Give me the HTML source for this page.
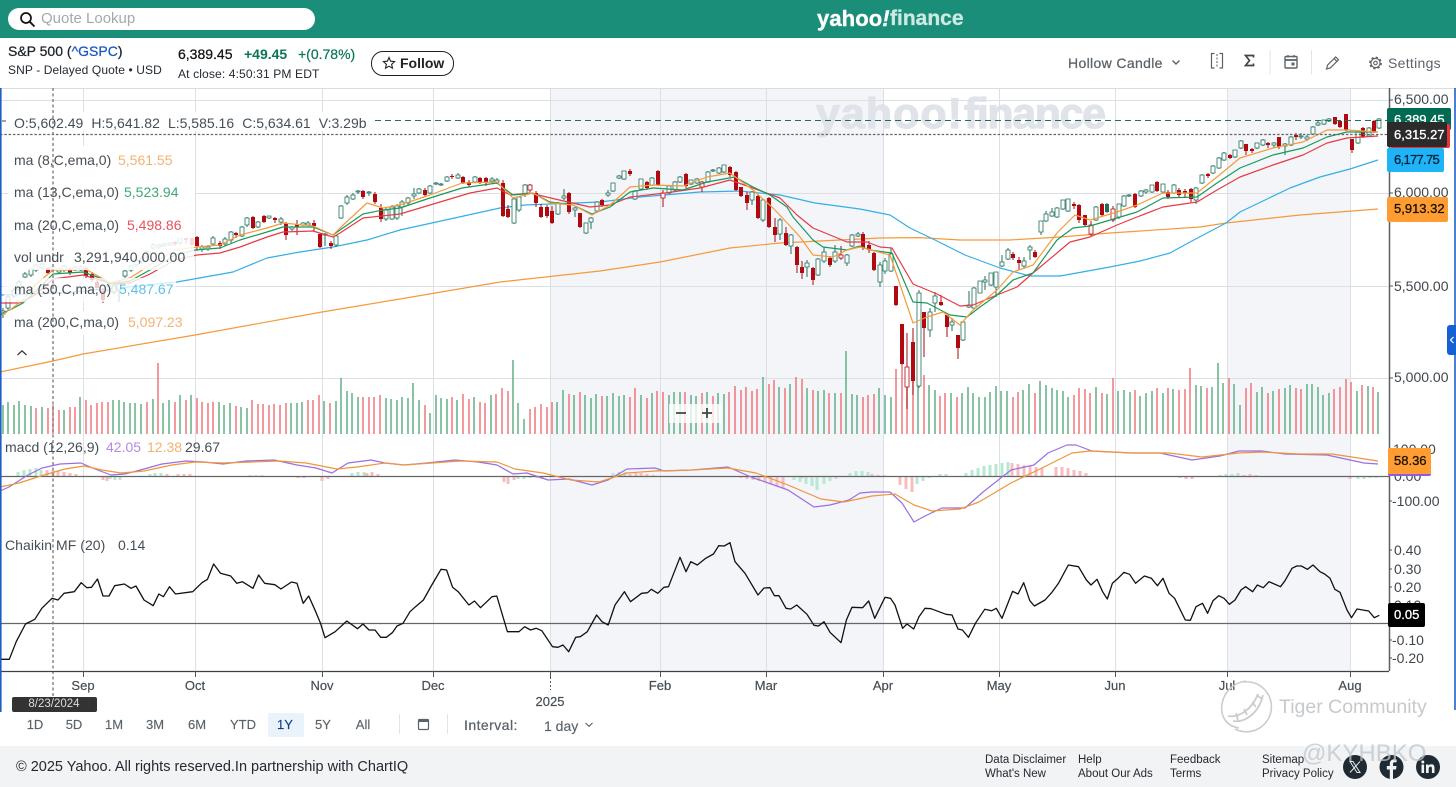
<!DOCTYPE html>
<html lang="en"><head><meta charset="utf-8"><title>S&amp;P 500 Chart</title>
<style>
html,body{margin:0;padding:0;background:#fff}
body{width:1456px;height:787px;overflow:hidden;position:relative;font-family:"Liberation Sans",sans-serif;color:#232a31}
.t{position:absolute;white-space:nowrap;line-height:16px}
.md{-webkit-text-stroke:.25px currentColor}
.c{transform:translateX(-50%)}
.leg{font-size:14px;color:#464e56}
.ax{font-size:14px;color:#3f464c;left:1394px}
.x{font-size:13px;color:#464e56;-webkit-text-stroke:.2px currentColor}
.r{font-size:13px;color:#5b636a;top:717px;-webkit-text-stroke:.15px currentColor}
.f{font-size:11.5px;color:#232a31}
.box{position:absolute;border-radius:2px}
.boxt{position:absolute;font-size:13px;line-height:16px;white-space:nowrap;-webkit-text-stroke:.3px currentColor}
</style></head><body>

<svg width="1456" height="787" viewBox="0 0 1456 787" style="position:absolute;left:0;top:0">
<rect x="550" y="88" width="333" height="583" fill="#f3f5f9"/>
<rect x="1227" y="88" width="123" height="583" fill="#f3f5f9"/>
<g font-family="Liberation Sans" font-weight="700" fill="#e0e3ea" stroke="#e0e3ea" stroke-width="1.2">
<text x="816" y="128" font-size="43" textLength="146">yahoo!</text>
<text x="964" y="128" font-size="43" textLength="142">finance</text>
</g>
<path d="M83.5 88V671M195.5 88V671M322.5 88V671M433.5 88V671M550.5 88V671M660.5 88V671M766.5 88V671M883.5 88V671M999.5 88V671M1115.5 88V671M1227.5 88V671M1350.5 88V671" stroke="#dcdfe4" fill="none"/>
<path d="M0 100.5H1389M0 193.5H1389M0 286.5H1389M0 378.5H1389" stroke="#dcdfe4" fill="none"/>
<path d="M0 88.5H1456" stroke="#dadde0"/>
<!-- volume -->
<path fill="none" stroke="#55aa7c" stroke-width="1.4" d="M3 405V434M8 402V434M14 405V434M19 401V434M25 405V434M31 406V434M42 407V434M64 410V434M80 397V434M113 400V434M119 400V434M124 402V434M130 403V434M135 403V434M141 404V434M153 399V434M163 403V434M169 400V434M180 395V434M191 395V434M219 402V434M224 405V434M230 403V434M241 407V434M247 408V434M291 403V434M297 403V434M302 402V434M324 401V434M336 401V434M341 378V434M347 391V434M352 393V434M358 397V434M386 398V434M391 399V434M397 400V434M402 397V434M408 398V434M413 383V434M419 400V434M430 413V434M436 395V434M441 398V434M447 399V434M457 400V434M474 397V434M491 395V434M513 360V434M518 403V434M524 419V434M557 402V434M563 390V434M574 395V434M585 395V434M591 398V434M596 394V434M607 396V434M613 393V434M619 396V434M624 395V434M641 395V434M652 393V434M669 395V434M674 392V434M680 392V434M691 395V434M696 396V434M707 392V434M718 393V434M724 394V434M763 377V434M779 387V434M790 384V434M807 388V434M818 391V434M824 390V434M835 393V434M846 351V434M852 394V434M857 395V434M879 388V434M885 395V434M891 397V434M918 370V434M929 385V434M935 390V434M951 393V434M962 393V434M968 387V434M973 393V434M979 397V434M985 397V434M990 392V434M996 386V434M1001 391V434M1007 391V434M1023 390V434M1029 384V434M1040 381V434M1046 385V434M1052 388V434M1057 390V434M1063 391V434M1068 397V434M1096 387V434M1107 394V434M1118 391V434M1124 390V434M1130 392V434M1140 396V434M1146 393V434M1152 391V434M1163 393V434M1173 389V434M1196 385V434M1201 386V434M1212 387V434M1218 363V434M1223 383V434M1234 384V434M1240 405V434M1257 392V434M1262 387V434M1273 391V434M1285 388V434M1290 385V434M1307 384V434M1312 384V434M1318 387V434M1323 395V434M1329 393V434M1357 391V434M1368 386V434M1378 392V434"/>
<path fill="none" stroke="#ee6c72" stroke-width="1.4" d="M36 408V434M48 408V434M53 405V434M59 410V434M70 407V434M75 407V434M86 400V434M91 405V434M97 403V434M102 402V434M108 402V434M147 402V434M158 363V434M175 402V434M186 400V434M197 398V434M202 402V434M208 403V434M213 402V434M236 406V434M252 400V434M258 404V434M263 404V434M269 405V434M274 404V434M280 405V434M286 403V434M308 400V434M313 400V434M319 395V434M330 403V434M363 397V434M369 397V434M374 397V434M380 395V434M425 405V434M452 397V434M463 394V434M469 399V434M480 402V434M485 403V434M496 394V434M502 388V434M508 391V434M530 409V434M535 407V434M541 404V434M547 407V434M552 402V434M569 394V434M580 392V434M602 396V434M630 397V434M635 388V434M647 398V434M657 391V434M663 392V434M685 392V434M702 393V434M713 396V434M729 392V434M735 386V434M741 390V434M746 387V434M752 391V434M757 389V434M769 384V434M774 380V434M785 388V434M796 377V434M802 379V434M813 390V434M829 393V434M841 393V434M863 397V434M868 395V434M874 394V434M896 369V434M902 365V434M907 377V434M913 373V434M924 375V434M940 396V434M945 393V434M957 397V434M1013 397V434M1018 392V434M1035 393V434M1074 395V434M1079 388V434M1085 389V434M1090 393V434M1102 393V434M1113 378V434M1135 390V434M1157 388V434M1168 388V434M1179 390V434M1185 389V434M1190 368V434M1207 388V434M1229 378V434M1246 388V434M1251 383V434M1268 393V434M1279 389V434M1296 388V434M1301 389V434M1334 389V434M1340 387V434M1346 379V434M1351 382V434M1362 385V434M1373 387V434"/>
<!-- MA lines -->
<g fill="none" stroke-width="1.2" stroke-linejoin="round">
<polyline stroke="#f59a3c" points="0,372 53,361 83,354 195,335 322,312 400,299 500,282 600,271 660,262 730,248 780,243 840,240 880,238 920,237.6 960,240 1010,240 1060,237 1110,233 1200,227 1226,223 1300,215 1378,209"/>
<polyline stroke="#35aee8" points="0,295 60,293 120,288 177,282 233,272 267,258 300,252 333,247 367,240 400,230 500,208 525,205 600,202 640,197 700,192 740,191 780,195 815,203 860,209 890,215 910,228 935,240 965,255 1000,268 1030,276 1060,276 1110,267 1140,261 1170,253 1190,242 1226,223 1240,212 1290,188 1320,177 1350,169 1378,160"/>
</g>
<!-- candle wicks -->
<path fill="none" stroke="#1f6f5a" stroke-width="1" d="M3 308V318M8 295V310M14 288V298M19 280V291M25 272V278M31 268V277M36 264V272M42 263V270M53 266V271M59 268V273M64 265V272M75 266V271M81 265V271M108 283V292M114 284V294M119 280V302M125 269V278M131 265V272M136 258V268M142 256V264M147 250V258M153 243V250M159 244V249M164 243V247M170 242V246M180 237V245M202 245V252M208 245V251M213 236V246M225 237V246M231 231V243M242 226V237M247 217V227M258 221V228M269 216V219M281 217V225M292 226V231M303 222V226M308 221V226M325 233V246M336 235V247M341 205V219M347 195V205M353 193V200M358 190V194M369 191V196M386 207V221M392 205V220M397 204V220M402 200V216M408 197V205M414 188V199M419 188V194M430 185V194M436 182V185M441 183V186M447 176V182M458 173V179M475 176V183M492 177V183M497 178V184M514 198V224M519 196V212M525 184V197M558 202V215M564 189V200M575 207V217M586 223V234M591 217V229M597 201V212M608 190V197M613 183V192M619 175V179M624 171V180M635 190V200M641 179V190M652 177V186M669 185V194M675 181V191M680 176V183M691 180V185M697 178V184M708 171V183M713 169V172M719 167V174M724 165V173M752 191V205M763 199V222M780 218V240M791 234V254M807 260V277M818 258V276M824 247V263M835 245V263M847 254V266M852 234V247M858 232V237M880 262V287M885 258V274M891 248V272M919 290V388M930 308V337M935 292V312M952 318V331M963 322V341M969 291V308M974 287V309M980 281V293M985 276V290M991 273V286M996 272V297M1002 255V267M1008 248V260M1024 257V269M1030 245V260M1041 221V235M1046 211V222M1052 208V217M1057 207V218M1063 200V210M1068 199V212M1096 206V221M1107 203V213M1119 204V219M1124 195V207M1129 194V197M1141 190V197M1146 189V194M1152 185V193M1163 184V193M1174 184V194M1196 187V204M1202 174V184M1213 165V174M1219 157V169M1224 152V161M1235 150V158M1241 140V149M1257 143V149M1263 139V146M1274 142V148M1285 143V155M1291 136V146M1301 133V139M1307 135V141M1313 126V135M1318 121V126M1324 120V125M1329 118V122M1358 131V144M1369 127V137M1379 118V129"/>
<path fill="none" stroke="#a80a10" stroke-width="1" d="M48 267V274M70 268V275M86 266V278M92 272V282M97 280V290M103 288V303M175 241V246M186 236V244M192 234V249M197 236V251M220 241V249M236 232V238M253 216V229M264 215V223M275 217V223M286 222V240M297 220V235M314 220V231M320 233V248M331 241V249M363 190V199M375 192V204M381 204V222M425 188V197M452 174V179M463 176V184M469 180V187M480 177V184M486 177V186M503 180V217M508 205V218M530 184V192M536 191V207M541 204V218M547 205V218M552 206V224M569 192V214M580 213V228M602 199V207M630 169V176M647 181V190M658 170V186M663 190V207M686 173V188M702 181V192M730 166V177M736 171V191M741 187V197M747 192V210M758 195V219M769 197V228M775 218V242M786 227V246M797 246V273M802 261V279M813 267V285M830 256V267M841 246V260M863 232V250M869 241V253M874 252V271M896 286V306M902 324V365M907 333V409M913 328V395M924 312V357M941 295V306M947 315V337M958 335V359M1013 252V260M1019 257V270M1035 250V258M1074 202V209M1079 204V223M1085 215V227M1091 221V237M1102 203V216M1113 206V222M1135 193V208M1157 181V192M1168 190V199M1179 188V197M1185 189V197M1191 188V202M1208 173V178M1230 154V159M1246 144V155M1252 148V153M1268 142V148M1279 137V149M1296 133V140M1335 117V125M1340 120V128M1346 114V131M1352 139V153M1363 127V138M1374 120V133"/>
<!-- candle bodies green hollow -->
<path fill="#fff" stroke="#1f6f5a" stroke-width=".8" d="M1 311h4v3h-4zM6 297h4v11h-4zM12 290h4v6h-4zM17 282h4v7h-4zM23 274h4v3h-4zM29 269h4v6h-4zM34 265h4v5h-4zM40 264h4v4h-4zM51 267h4v3h-4zM57 269h4v3h-4zM62 266h4v4h-4zM73 267h4v3h-4zM79 267h4v3h-4zM106 286h4v4h-4zM112 286h4v6h-4zM117 284h4v6h-4zM123 271h4v5h-4zM129 266h4v4h-4zM134 260h4v5h-4zM140 258h4v4h-4zM145 252h4v4h-4zM151 245h4v3h-4zM157 245h4v2h-4zM162 244h4v2h-4zM168 243h4v2h-4zM178 238h4v5h-4zM200 247h4v2h-4zM206 247h4v2h-4zM211 238h4v6h-4zM223 239h4v5h-4zM229 232h4v8h-4zM240 227h4v9h-4zM245 218h4v7h-4zM256 222h4v5h-4zM267 216h4v2h-4zM279 219h4v3h-4zM290 227h4v2h-4zM301 223h4v2h-4zM306 223h4v2h-4zM323 234h4v1h-4zM334 236h4v9h-4zM339 206h4v12h-4zM345 197h4v6h-4zM351 195h4v4h-4zM356 191h4v1h-4zM367 192h4v1h-4zM384 210h4v9h-4zM390 207h4v12h-4zM395 206h4v12h-4zM400 202h4v5h-4zM406 198h4v5h-4zM412 194h4v2h-4zM417 189h4v4h-4zM428 186h4v7h-4zM434 183h4v1h-4zM439 184h4v1h-4zM445 177h4v4h-4zM456 175h4v3h-4zM473 177h4v5h-4zM490 179h4v2h-4zM495 180h4v2h-4zM512 199h4v24h-4zM517 197h4v13h-4zM523 185h4v9h-4zM556 203h4v11h-4zM562 196h4v2h-4zM573 208h4v2h-4zM584 223h4v10h-4zM589 218h4v4h-4zM595 202h4v9h-4zM606 193h4v2h-4zM611 183h4v8h-4zM617 176h4v2h-4zM622 171h4v8h-4zM633 191h4v8h-4zM639 179h4v10h-4zM650 178h4v7h-4zM667 186h4v7h-4zM673 182h4v8h-4zM678 177h4v5h-4zM689 180h4v4h-4zM695 179h4v4h-4zM706 172h4v10h-4zM711 170h4v1h-4zM717 168h4v5h-4zM722 165h4v7h-4zM750 192h4v8h-4zM761 200h4v20h-4zM778 220h4v14h-4zM789 235h4v11h-4zM805 263h4v4h-4zM816 259h4v16h-4zM822 252h4v9h-4zM833 252h4v9h-4zM845 255h4v8h-4zM850 235h4v11h-4zM856 234h4v2h-4zM878 265h4v17h-4zM883 261h4v10h-4zM889 254h4v17h-4zM917 293h4v93h-4zM928 312h4v18h-4zM933 296h4v7h-4zM950 322h4v3h-4zM961 322h4v18h-4zM967 305h4v2h-4zM972 288h4v20h-4zM978 281h4v12h-4zM983 280h4v2h-4zM989 273h4v12h-4zM994 272h4v15h-4zM1000 262h4v4h-4zM1006 250h4v9h-4zM1022 261h4v5h-4zM1028 247h4v3h-4zM1039 221h4v11h-4zM1044 214h4v7h-4zM1050 212h4v4h-4zM1055 208h4v9h-4zM1061 200h4v9h-4zM1066 199h4v12h-4zM1094 207h4v13h-4zM1117 204h4v13h-4zM1122 196h4v10h-4zM1127 195h4v1h-4zM1139 191h4v5h-4zM1144 190h4v2h-4zM1150 185h4v7h-4zM1161 184h4v8h-4zM1172 185h4v8h-4zM1194 188h4v12h-4zM1200 175h4v8h-4zM1211 166h4v7h-4zM1217 158h4v10h-4zM1222 153h4v7h-4zM1233 150h4v7h-4zM1239 141h4v7h-4zM1255 143h4v5h-4zM1261 140h4v5h-4zM1272 143h4v2h-4zM1283 144h4v2h-4zM1289 137h4v8h-4zM1299 136h4v1h-4zM1305 137h4v2h-4zM1311 127h4v7h-4zM1316 123h4v2h-4zM1322 120h4v4h-4zM1327 119h4v2h-4zM1356 132h4v11h-4zM1367 128h4v8h-4zM1377 119h4v9h-4z"/>
<path fill="#1f6f5a" d="M1105 204h4v8h-4z"/>
<!-- candle bodies red -->
<path fill="#b00a10" d="M46 268h4v5h-4zM68 270h4v3h-4zM84 268h4v8h-4zM90 274h4v6h-4zM95 282h4v6h-4zM101 291h4v9h-4zM173 242h4v2h-4zM184 237h4v3h-4zM190 235h4v10h-4zM195 237h4v9h-4zM218 243h4v3h-4zM234 233h4v2h-4zM251 217h4v11h-4zM262 216h4v6h-4zM273 218h4v2h-4zM284 223h4v12h-4zM295 224h4v3h-4zM312 223h4v3h-4zM318 234h4v13h-4zM329 243h4v3h-4zM361 191h4v6h-4zM373 194h4v8h-4zM379 208h4v11h-4zM423 190h4v5h-4zM450 176h4v1h-4zM461 177h4v6h-4zM467 182h4v3h-4zM478 178h4v4h-4zM484 178h4v5h-4zM501 183h4v33h-4zM506 209h4v8h-4zM534 193h4v10h-4zM539 207h4v10h-4zM545 207h4v9h-4zM550 211h4v12h-4zM567 193h4v19h-4zM578 213h4v14h-4zM600 200h4v5h-4zM628 171h4v3h-4zM645 182h4v6h-4zM656 171h4v14h-4zM684 174h4v12h-4zM728 167h4v8h-4zM734 172h4v18h-4zM739 187h4v9h-4zM745 195h4v8h-4zM756 196h4v22h-4zM767 198h4v29h-4zM773 227h4v8h-4zM784 233h4v12h-4zM795 247h4v18h-4zM800 267h4v6h-4zM811 268h4v12h-4zM828 258h4v7h-4zM861 234h4v14h-4zM867 245h4v5h-4zM872 253h4v17h-4zM894 286h4v19h-4zM900 324h4v40h-4zM911 342h4v39h-4zM922 312h4v16h-4zM939 302h4v3h-4zM945 315h4v12h-4zM956 335h4v13h-4zM1011 254h4v4h-4zM1017 260h4v3h-4zM1033 252h4v5h-4zM1072 204h4v2h-4zM1077 205h4v15h-4zM1083 215h4v10h-4zM1100 204h4v11h-4zM1133 194h4v13h-4zM1155 182h4v9h-4zM1166 192h4v5h-4zM1177 190h4v5h-4zM1183 191h4v2h-4zM1189 189h4v10h-4zM1206 174h4v2h-4zM1228 155h4v3h-4zM1244 144h4v7h-4zM1250 149h4v2h-4zM1266 143h4v2h-4zM1277 137h4v10h-4zM1294 135h4v2h-4zM1333 117h4v7h-4zM1338 121h4v6h-4zM1344 114h4v16h-4zM1350 139h4v11h-4zM1361 128h4v9h-4zM1372 121h4v11h-4z"/>
<path fill="#fff" stroke="#b00a10" stroke-width=".8" d="M528 185h4v5h-4zM661 193h4v5h-4zM700 182h4v5h-4zM839 255h4v3h-4zM905 367h4v20h-4zM1089 225h4v9h-4zM1111 209h4v11h-4z"/>
<g fill="none" stroke-width="1.2" stroke-linejoin="round">
<polyline stroke="#e83a45" points="0,303 20,303 35,295 53,279 83,275 100,280 115,284 130,283 150,274 175,260 197,255 220,253 240,247 267,237 283,232 313,231 333,237 340,233 363,218 400,214 430,205 470,193 497,188 510,195 530,193 555,199 590,207 610,205 630,197 665,193 700,188 730,180 750,187 780,198 797,215 813,228 830,235 847,242 867,242 880,247 892,248 913,284 937,294 960,306 973,305 997,295 1017,287 1033,273 1057,253 1070,242 1090,237 1117,225 1137,217 1163,207 1197,202 1217,190 1240,177 1273,165 1303,155 1327,143 1347,138 1378,136"/>
<polyline stroke="#1a9a5c" points="0,314 10,310 23,303 35,292 53,274 83,272 100,278 110,284 130,281 150,270 175,255 195,250 220,248 240,240 267,232 283,227 313,227 333,235 340,230 363,214 383,210 400,208 430,198 462,188 497,183 513,195 533,193 550,202 573,205 592,214 610,207 630,192 653,188 683,190 707,182 735,177 753,187 770,195 787,207 793,217 813,240 823,247 847,250 860,246 870,250 892,253 913,302 927,303 950,315 967,317 980,307 997,295 1013,280 1033,273 1057,240 1073,228 1090,226 1117,218 1137,212 1163,198 1197,197 1217,183 1240,168 1273,155 1303,148 1327,137 1347,132 1378,132"/>
<polyline stroke="#f59a3c" points="0,316 10,310 23,300 35,285 53,270 70,270 85,269 100,277 110,283 130,278 150,265 175,250 197,247 220,245 240,235 267,228 283,223 313,226 333,235 340,228 367,203 383,208 400,205 430,195 462,183 497,182 513,198 533,193 550,203 573,205 592,215 610,205 630,187 653,185 683,186 707,177 730,173 753,190 773,208 790,226 800,237 813,255 833,257 847,250 860,247 890,255 913,323 927,317 943,312 960,325 973,310 997,290 1013,272 1033,265 1057,233 1075,215 1090,220 1117,212 1137,205 1163,193 1197,193 1217,177 1240,158 1273,148 1303,142 1327,130 1347,130 1378,132"/>
</g>
<!-- MACD histogram -->
<path fill="none" stroke="#b6e8d2" stroke-width="3" d="M18 476V472M24 476V470M30 476V469M36 476V468M41 476V470M110 476V479M115 476V480M120 476V480M150 476V474M155 476V473M161 476V473M167 476V474M250 476V475M256 476V475M262 476V475M352 476V473M358 476V472M364 476V472M518 476V479M524 476V479M530 476V478M613 476V473M619 476V472M625 476V472M794 476V480M800 476V482M806 476V484M812 476V486M817 476V490M824 476V484M830 476V481M836 476V479M850 476V473M856 476V471M862 476V471M868 476V472M940 476V474M946 476V474M917 476V484M923 476V481M929 476V478M966 476V473M972 476V470M978 476V468M984 476V466M990 476V465M996 476V464M1002 476V463M1008 476V462M1220 476V475M1226 476V474M1232 476V474M1238 476V473M1358 476V479M1364 476V479M1370 476V478M1376 476V478M1382 476V477"/>
<path fill="none" stroke="#f8bcbf" stroke-width="3" d="M47 476V470M53 476V470M58 476V471M64 476V472M70 476V473M76 476V474M103 476V480M107 476V481M167 476V474M178 476V474M184 476V474M190 476V474M298 476V478M304 476V478M322 476V480M328 476V479M322 476V481M372 476V472M367 476V473M378 476V474M504 476V482M508 476V484M514 476V480M537 476V478M542 476V479M630 476V474M636 476V473M641 476V473M647 476V474M653 476V475M741 476V478M747 476V479M753 476V480M759 476V481M765 476V482M771 476V484M777 476V486M783 476V488M802 476V478M872 476V474M878 476V475M884 476V475M900 476V485M906 476V489M912 476V492M1012 476V463M1018 476V464M1024 476V465M1030 476V466M1036 476V467M1042 476V468M1056 476V467M1062 476V467M1068 476V468M1074 476V470M1080 476V471M1086 476V473M1180 476V478M1186 476V479M1192 476V479M1244 476V475M1250 476V474M1256 476V475M1350 476V479"/>
<path d="M0 476.5H1389M0 623.5H1389" stroke="#666" stroke-width="1.2"/>
<g fill="none" stroke-width="1.2" stroke-linejoin="round">
<polyline stroke="#9a6fe2" points="0,491 9,487 28,475 42,468 60,464 81,463 95,469 111,475 125,474 144,469 162,464 186,461 204,462 223,464 246,461 274,460 297,465 316,468 332,473 348,463 371,460 385,463 404,465 427,463 455,460 478,462 497,465 513,474 527,473 548,480 569,479 592,485 608,480 627,469 655,468 664,471 692,470 728,467 751,477 774,485 788,490 814,507 830,505 849,500 860,493 872,492 890,492 902,503 914,522 925,516 942,508 955,508 965,508 983,492 1011,470 1034,465 1048,453 1067,445 1076,445 1092,451 1132,453 1160,453 1192,460 1220,456 1239,451 1262,451 1285,454 1327,455 1350,460 1364,463 1378,464"/>
<polyline stroke="#f0953b" points="0,487 19,483 44,475 65,469 84,466 102,470 121,473 144,471 172,465 195,462 223,463 251,462 279,461 306,463 337,469 357,467 385,463 404,465 432,463 460,461 497,462 515,469 543,473 571,480 599,482 627,473 655,471 692,470 728,468 756,473 788,485 821,499 844,502 872,496 895,494 914,505 932,511 960,509 979,502 1011,483 1044,467 1072,453 1090,451 1132,453 1169,453 1202,457 1239,453 1262,452 1299,454 1332,454 1378,461"/>
<polyline stroke="#111" stroke-width="1.3" points="0,659.3 9.3,659.3 16.2,641.7 25.5,624 34.8,619.3 41.8,608.3 52,598.3 58,600 64,593.3 74.3,591.7 81.2,582.7 86.8,587.7 91.5,587.3 97.5,579 103,596 109,596 114.7,585.7 124.4,584 131,588.3 136,586 144,600 153.2,605.7 158.8,594 163.4,596.7 169.5,586.7 175.5,594 192.7,591.7 202,582.7 207.5,579.3 213.6,564 220.5,573.3 230.7,576 236.8,583.3 242.3,581.7 253,588.3 258.6,575 264.6,583.3 274.8,584.7 280.9,589 291.5,582 297,583.3 303.2,603.3 308.7,596 315.7,611.7 320.3,622.7 325,637.7 335.2,631.7 346.8,621 357.5,628.7 363,624 369,630 375,630 380.7,637.3 386.3,637.3 392.3,632.7 397,626 403,623.3 410,611.7 415.5,606.7 423.4,600 431.8,585 441,569.3 446.6,570 452.6,587.3 458.2,591.7 468.9,605 474.5,601 480.5,607.7 492,596.7 496.8,596 507.4,631.7 519,631.7 524.6,626.7 530.6,630 536.2,628.3 541.8,630.7 552.5,646.7 558,647.3 563,645 568.7,651.7 575.7,637.3 580.3,636.7 587.3,631.7 596.6,615 602,621.7 608.2,625 615,605 624.4,591.7 630.5,601.7 641.6,593.3 647.6,592.7 651.3,589.3 657.8,593.3 663.9,587.3 668.5,586.7 680,557.3 686,571.7 690.8,561.7 697.3,565 705.7,558.3 713.5,554 718.7,545.7 724.2,546 730,542.7 735,561.7 745,573.3 758,595 764,588 770,587.7 774.4,595.7 779,595.7 786,608.3 790.7,609 796.7,605 807,614.3 814,625.3 818.5,626 824,621.7 830,632.3 841,642.7 846.4,620 852,607.3 862.6,607.7 868.7,601 874.7,618.3 885,597.3 890.5,598.3 895,605 902.6,628.3 907,624 913.7,629 919,616.7 925,608.3 931,608.7 946,614.3 952,615 958,629 962.4,630 968.5,637.3 975.4,623.3 984.7,609.3 991.7,610.7 996.3,608.3 1002,618.3 1012.6,591.3 1018,594 1023.7,582.7 1029.8,600.7 1034.4,606 1045,600 1051.6,592.7 1058.5,583.3 1068.3,565 1078.5,566.7 1086.4,580 1091,585 1097,579.3 1102.6,591.7 1107.3,599 1112.4,583.3 1117,579.3 1124,572.3 1129.6,574.3 1135.6,583.3 1144.4,576 1151.4,578.3 1157.4,585.7 1163,578.3 1169,593.3 1174.6,598.3 1185.3,620 1190.4,620.3 1196,606.7 1202.5,603.3 1207.6,613.3 1213,600.7 1218.7,595.7 1224,598.3 1229.4,604.3 1235,600 1241,590 1245.6,586.7 1252.6,591.7 1257.3,585 1263.3,587.7 1269,581.7 1280.5,586.7 1285,580.7 1292,568.3 1296.7,566 1301.3,566 1307.4,569.3 1313,565 1320,571.7 1324.6,574 1330,578.3 1334.8,589.3 1340,592.3 1347,610 1351.5,617.7 1357,609 1368.7,611 1374.3,617.7 1379.3,615.3"/>
</g>
<!-- label backgrounds -->
<rect x="8" y="112" width="360" height="19" fill="#fff"/>
<rect x="8" y="146" width="187" height="92" fill="#fff"/>
<rect x="4" y="238" width="190" height="32" fill="#fff" fill-opacity=".85"/>
<rect x="4" y="278" width="172" height="24" fill="#fff" fill-opacity=".78"/>
<rect x="8" y="311" width="178" height="24" fill="#fff"/>
<!-- price lines -->
<path d="M375 120.5H1389" stroke="#1f6f5a" stroke-dasharray="6 4" fill="none"/>
<path d="M2 121H6" stroke="#444"/>
<path d="M0 134.5H1389" stroke="#666" stroke-width="1.3" stroke-dasharray="2.5 1.8" fill="none"/>
<path d="M53 88V697" stroke="#777" stroke-width="1.3" stroke-dasharray="3 2.5" fill="none"/>
<!-- axes -->
<path d="M1389.5 88V671" stroke="#5c6064" stroke-width="1.5"/>
<path d="M0 671.5H1389" stroke="#3c4146" stroke-width="1.3"/>
<path d="M83.5 671V677M195.5 671V677M322.5 671V677M433.5 671V677M550.5 671V677M660.5 671V677M766.5 671V677M883.5 671V677M999.5 671V677M1115.5 671V677M1227.5 671V677M1350.5 671V677" stroke="#555"/>
<path d="M1389 100H1393M1389 193H1393M1389 286H1393M1389 378H1393M1389 501H1392M1389 550H1392M1389 569H1392M1389 587H1392M1389 640H1392M1389 658H1392" stroke="#555"/>
<path d="M550.5 677V690" stroke="#555" stroke-dasharray="2 2"/>
<path d="M0.8 88V712" stroke="#1f5fc4" stroke-width="1.6"/>
<path d="M1455 88V710" stroke="#1f5fc4" stroke-width="1.6"/>
<!-- zoom controls -->
<rect x="669" y="404" width="52" height="19" fill="#fff" fill-opacity=".78"/>
<path d="M676 413H686M702 413H712M707 408V418" stroke="#444" stroke-width="1.8"/>
</svg>

<!-- header -->
<div style="position:absolute;left:0;top:0;width:1456px;height:38px;background:#1b8e79"></div>
<div style="position:absolute;left:8px;top:8px;width:307px;height:22px;background:#fff;border-radius:11px"></div>
<svg width="18" height="18" style="position:absolute;left:19px;top:11px" viewBox="0 0 18 18"><circle cx="7" cy="7" r="5" fill="none" stroke="#111" stroke-width="1.7"/><path d="M10.8 10.8L15.5 15.5" stroke="#111" stroke-width="1.9"/></svg>
<div class="t" style="left:41px;top:11px;font-size:15px;color:#a4a8ad">Quote Lookup</div>
<div class="t" style="left:817px;top:7px;font-size:22px;line-height:24px;font-weight:700;color:#fff;letter-spacing:.1px;-webkit-text-stroke:.4px #fff">yahoo<i>!</i></div>
<div class="t" style="left:890px;top:7px;font-size:21px;line-height:24px;font-weight:700;color:#cde9e3;-webkit-text-stroke:.3px #cde9e3">finance</div>

<!-- title row -->
<div class="t md" style="left:8px;top:43px;font-size:14px;color:#1d2329">S&amp;P 500 (<span style="color:#1a56c4">^GSPC</span>)</div>
<div class="t" style="left:8px;top:62px;font-size:12px;color:#232a31;letter-spacing:.1px">SNP - Delayed Quote • USD</div>
<div class="t md" style="left:178px;top:46px;font-size:14px;color:#111">6,389.45</div>
<div class="t" style="left:244px;top:46px;font-size:14px;font-weight:700;color:#0a7558">+49.45</div>
<div class="t" style="left:298px;top:46px;font-size:14px;color:#0a7558;-webkit-text-stroke:.2px #0a7558">+(0.78%)</div>
<div class="t" style="left:178px;top:66px;font-size:12.1px;color:#232a31;letter-spacing:.1px">At close: 4:50:31 PM EDT</div>
<div style="position:absolute;left:371px;top:51px;width:81px;height:23px;border:1.2px solid #222;border-radius:12px"></div>
<svg width="14" height="14" viewBox="0 0 14 14" style="position:absolute;left:382px;top:56px"><path d="M7 1.5L8.6 5.2 12.6 5.6 9.6 8.3 10.5 12.2 7 10.2 3.5 12.2 4.4 8.3 1.4 5.6 5.4 5.2Z" fill="none" stroke="#222" stroke-width="1.1"/></svg>
<div class="t" style="left:400px;top:55px;font-size:14px;font-weight:700;color:#222">Follow</div>

<!-- toolbar -->
<div class="t" style="left:1068px;top:55px;font-size:14px;color:#5b636a;-webkit-text-stroke:.25px #5b636a;letter-spacing:.35px">Hollow Candle</div>
<svg width="1456" height="88" viewBox="0 0 1456 88" style="position:absolute;left:0;top:0" fill="none" stroke="#5b636a">
<path d="M1172.5 60.5l3.5 3.500 3.500-3.500" stroke-width="1.400"/>
<path d="M1214.500 53.500h-3v14.500h3M1219.500 53.500h3v14.500h-3" stroke-width="1.200"/><path d="M1217 54v14" stroke-dasharray="2 1.500"/>
<path d="M1253.500 57.500v-2h-8l4 5-4 5h8v-2" stroke="#444" stroke-width="1.700"/>
<path d="M1270 50v24M1311.500 50v24" stroke="#e2e4e6"/>
<rect x="1285" y="56.500" width="12" height="11.500" rx="1" stroke-width="1.400"/><path d="M1285 60h12" stroke-width="1.800"/><path d="M1288 55v2.500M1294 55v2.500" stroke-width="1.300"/><rect x="1291.500" y="62.500" width="3" height="3" fill="#5b636a" stroke="none"/>
<path d="M1326.500 69l1.200-4 8-8 2.800 2.800-8 8zM1334 58.500l2.800 2.800" stroke-width="1.200"/>
<circle cx="1375.500" cy="63" r="4.600" stroke-width="1.200"/><circle cx="1375.500" cy="63" r="1.800" stroke-width="1.100"/><circle cx="1375.500" cy="63" r="5.600" stroke-width="1.600" stroke-dasharray="2.200 2.200"/>
</svg>
<div class="t" style="left:1388px;top:55px;font-size:14px;color:#5b636a;letter-spacing:.3px">Settings</div>

<!-- legend -->
<div class="t leg" style="left:14px;top:115px;word-spacing:4.200px">O:5,602.49 H:5,641.82 L:5,585.16 C:5,634.61 V:3.29b</div>
<div class="t leg" style="left:14px;top:152px">ma (8,C,ema,0)</div><div class="t leg" style="left:118px;top:152px;color:#f3b273">5,561.55</div>
<div class="t leg" style="left:14px;top:184px">ma (13,C,ema,0)</div><div class="t leg" style="left:124px;top:184px;color:#3fa878">5,523.94</div>
<div class="t leg" style="left:14px;top:217px">ma (20,C,ema,0)</div><div class="t leg" style="left:127px;top:217px;color:#e8525c">5,498.86</div>
<div class="t leg" style="left:14px;top:249px">vol undr</div><div class="t leg" style="left:74px;top:249px;letter-spacing:.15px">3,291,940,000.00</div>
<div class="t leg" style="left:14px;top:281px">ma (50,C,ma,0)</div><div class="t leg" style="left:119px;top:281px;color:#5cc0ec">5,487.67</div>
<div class="t leg" style="left:14px;top:314px">ma (200,C,ma,0)</div><div class="t leg" style="left:128px;top:314px;color:#f3b273">5,097.23</div>
<svg width="12" height="8" style="position:absolute;left:16px;top:349px" viewBox="0 0 12 8"><path d="M1.500 6L6 1.800 10.500 6" fill="none" stroke="#333" stroke-width="1.200"/></svg>
<div class="t leg" style="left:5px;top:439px">macd (12,26,9)</div>
<div class="t leg" style="left:106px;top:439px;color:#b48ae8">42.05</div>
<div class="t leg" style="left:147px;top:439px;color:#f3b273">12.38</div>
<div class="t leg" style="left:185px;top:439px">29.67</div>
<div class="t leg" style="left:5px;top:537px;letter-spacing:.05px">Chaikin MF (20)</div>
<div class="t leg" style="left:118px;top:537px">0.14</div>

<!-- right axis -->
<div class="t ax" style="top:91px">6,500.00</div>
<div class="t ax" style="top:184px">6,000.00</div>
<div class="t ax" style="top:278px">5,500.00</div>
<div class="t ax" style="top:369px">5,000.00</div>
<div class="t ax" style="top:441px;left:1393px">100.00</div>
<div class="t ax" style="top:468px">0.00</div>
<div class="t ax" style="top:493px;left:1392px">-100.00</div>
<div class="t ax" style="top:542px">0.40</div>
<div class="t ax" style="top:561px">0.30</div>
<div class="t ax" style="top:579px">0.20</div>
<div class="t ax" style="top:597px">0.10</div>
<div class="t ax" style="top:632px;left:1392px">-0.10</div>
<div class="t ax" style="top:650px;left:1392px">-0.20</div>

<div class="box" style="left:1387px;top:108px;width:64px;height:22px;background:#006b52"></div>
<div class="boxt" style="left:1394px;top:112px;color:#fff">6,389.45</div>
<div class="box" style="left:1390px;top:124px;width:60px;height:24px;background:#e8353c"></div>
<div class="box" style="left:1387px;top:122px;width:60px;height:25px;background:#2b2b2b"></div>
<div class="boxt" style="left:1394px;top:127px;color:#fff">6,315.27</div>
<div class="box" style="left:1387px;top:148px;width:57px;height:24px;background:#1fb3f7"></div>
<div class="boxt" style="left:1394px;top:152px;color:#06223a;letter-spacing:-.7px">6,177.75</div>
<div class="box" style="left:1387px;top:197px;width:61px;height:25px;background:#ff9d33"></div>
<div class="boxt" style="left:1394px;top:201px;color:#1a1205">5,913.32</div>
<div class="box" style="left:1388px;top:448px;width:43px;height:28px;background:#ff9d33;border-bottom:2px solid #8e5ce0;box-sizing:border-box"></div>
<div class="boxt" style="left:1394px;top:453px;color:#1a1205">58.36</div>
<div class="box" style="left:1388px;top:603px;width:37px;height:24px;background:#000"></div>
<div class="boxt" style="left:1394px;top:607px;color:#fff">0.05</div>
<div style="position:absolute;left:1447px;top:325px;width:9px;height:30px;background:#1560d4;border-radius:3px 0 0 3px"></div>
<svg width="6" height="8" viewBox="0 0 6 8" style="position:absolute;left:1449px;top:336px"><path d="M4.500 1L1.500 4l3 3" fill="none" stroke="#fff" stroke-width="1.200"/></svg>

<!-- x axis -->
<div class="t x c" style="left:83px;top:678px">Sep</div>
<div class="t x c" style="left:195px;top:678px">Oct</div>
<div class="t x c" style="left:322px;top:678px">Nov</div>
<div class="t x c" style="left:433px;top:678px">Dec</div>
<div class="t x c" style="left:550px;top:694px">2025</div>
<div class="t x c" style="left:660px;top:678px">Feb</div>
<div class="t x c" style="left:766px;top:678px">Mar</div>
<div class="t x c" style="left:883px;top:678px">Apr</div>
<div class="t x c" style="left:999px;top:678px">May</div>
<div class="t x c" style="left:1115px;top:678px">Jun</div>
<div class="t x c" style="left:1227px;top:678px">Jul</div>
<div class="t x c" style="left:1350px;top:678px">Aug</div>
<div style="position:absolute;left:12px;top:697px;width:85px;height:15px;background:#333;border-radius:2px"></div>
<div class="t c" style="left:54px;top:697px;font-size:11.5px;line-height:15px;color:#ddd">8/23/2024</div>

<!-- range row -->
<div style="position:absolute;left:268px;top:713px;width:36px;height:24px;background:#eaf3fb;border-radius:2px"></div>
<div class="t r c" style="left:35px">1D</div>
<div class="t r c" style="left:74px">5D</div>
<div class="t r c" style="left:114px">1M</div>
<div class="t r c" style="left:155px">3M</div>
<div class="t r c" style="left:197px">6M</div>
<div class="t r c" style="left:243px">YTD</div>
<div class="t r c" style="left:285px;color:#0f3d8c">1Y</div>
<div class="t r c" style="left:323px">5Y</div>
<div class="t r c" style="left:363px">All</div>
<svg width="60" height="28" viewBox="0 0 60 28" style="position:absolute;left:395px;top:711px" fill="none"><path d="M4.500 3v20M52.500 3v20" stroke="#e2e4e6"/><rect x="23.500" y="8.500" width="10" height="10" rx="1" stroke="#5b636a" stroke-width="1.200"/><path d="M23.500 10h10" stroke="#5b636a" stroke-width="2"/></svg>
<div class="t" style="left:464px;top:717px;font-size:14px;color:#5b636a;-webkit-text-stroke:.25px #5b636a;letter-spacing:.45px">Interval:</div>
<div class="t" style="left:544px;top:718px;font-size:14px;color:#5b636a;-webkit-text-stroke:.15px #5b636a">1 day</div>
<svg width="10" height="6" viewBox="0 0 10 6" style="position:absolute;left:584px;top:722px"><path d="M1.500 1L5 4.300 8.500 1" fill="none" stroke="#5b636a" stroke-width="1.200"/></svg>

<!-- footer -->
<div style="position:absolute;left:0;top:746px;width:1456px;height:41px;background:#f1f3f5"></div>
<div class="t" style="left:16px;top:759px;font-size:14.5px;color:#232a31">© 2025 Yahoo. All rights reserved.In partnership with ChartIQ</div>
<div class="t f" style="left:985px;top:752px">Data Disclaimer</div><div class="t f" style="left:985px;top:766px">What's New</div>
<div class="t f" style="left:1078px;top:752px">Help</div><div class="t f" style="left:1078px;top:766px">About Our Ads</div>
<div class="t f" style="left:1170px;top:752px">Feedback</div><div class="t f" style="left:1170px;top:766px">Terms</div>
<div class="t f" style="left:1262px;top:752px">Sitemap</div><div class="t f" style="left:1262px;top:766px">Privacy Policy</div>
<svg width="110" height="30" viewBox="0 0 110 30" style="position:absolute;left:1342px;top:752px">
<circle cx="13" cy="15" r="12" fill="#1f2a33"/><circle cx="49.500" cy="15" r="12" fill="#1f2a33"/><circle cx="86" cy="15" r="12" fill="#1f2a33"/>
<path d="M8 9.500h3l7 11h-3zM18 9.500l-10 11" fill="none" stroke="#e6e8ea" stroke-width="1"/>
<path d="M51 27v-9.500h3l.5-3.500H51v-2c0-1 .5-1.700 1.800-1.700h1.800V7.600c-.6-.1-1.400-.2-2.400-.2-2.700 0-4.400 1.600-4.400 4.300V14h-3v3.500h3V27z" fill="#f1f3f5"/>
<path d="M79.500 12.500h2.600v8.500h-2.600zM80.800 8.500a1.500 1.500 0 1 1 0 3 1.500 1.500 0 0 1 0-3zM84 12.500h2.500v1.200c.5-.8 1.500-1.400 2.800-1.400 2.600 0 3.200 1.700 3.200 4V21h-2.600v-4.100c0-1.100-.1-2.300-1.400-2.300s-1.800 1.100-1.800 2.300V21H84z" fill="#f1f3f5"/>
</svg>

<!-- watermarks -->
<svg width="60" height="60" viewBox="0 0 60 60" style="position:absolute;left:1216px;top:676px" fill="none" stroke="#c9cdd0" stroke-width="1.600">
<path d="M27 6a25 25 0 1 1-8 47"/><path d="M23 52C10 50 4 40 6 28 8 16 17 7 30 5"/>
<path d="M12 40c10 2 24-6 30-22M17 45c12 2 26-8 30-26M20 37l2 7M28 33l3 6M36 26l4 5M42 20l4 3" stroke-width="1.800"/>
</svg>
<div class="t" style="left:1279px;top:696px;font-size:19.500px;line-height:22px;color:#c6cacd">Tiger Community</div>
<div class="t" style="left:1302px;top:741px;font-size:24px;line-height:26px;color:rgba(190,196,200,.75)">@KYHBKO</div>
</body></html>
